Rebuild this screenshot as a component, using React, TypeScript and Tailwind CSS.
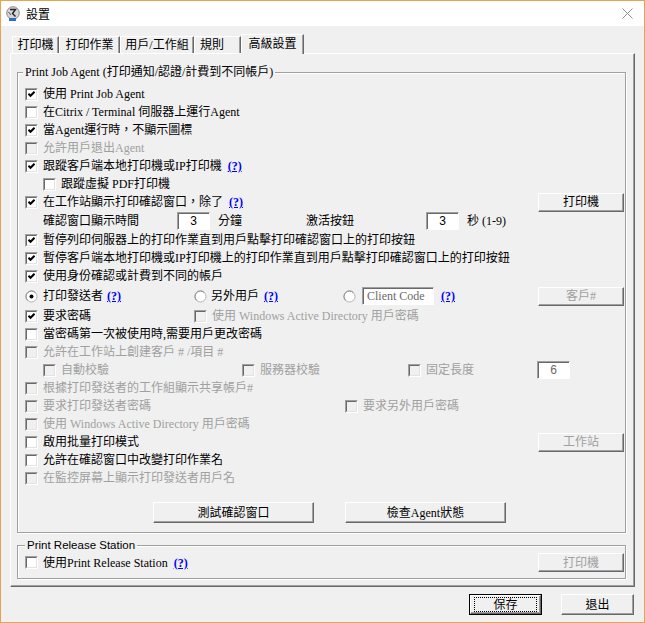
import React from "react";

type CBProps = { checked?: boolean; disabled?: boolean };

const CB = ({ checked = false, disabled = false }: CBProps) => (
  <span className="inline-flex w-[13px] h-[13px] shrink-0 border border-t-[#a0a0a0] border-l-[#a0a0a0] border-b-white border-r-white">
    <span
      className={
        "flex flex-1 items-center justify-center border border-t-[#696969] border-l-[#696969] border-b-[#e3e3e3] border-r-[#e3e3e3] " +
        (disabled ? "bg-[#f0f0f0]" : "bg-white")
      }
    >
      {checked && (
        <svg width="7" height="7" viewBox="0 0 7 7">
          <polyline points="0.5,2.8 2.5,4.8 6.5,0.8" fill="none" stroke="#000" strokeWidth="2" />
        </svg>
      )}
    </span>
  </span>
);

const Link = () => <span className="ml-[6px] text-[#0000ff] underline font-bold">(?)</span>;

const Check = ({
  label,
  checked,
  disabled,
  link,
  className = "",
}: {
  label: string;
  checked?: boolean;
  disabled?: boolean;
  link?: boolean;
  className?: string;
}) => (
  <div className={"flex items-center " + className}>
    <CB checked={checked} disabled={disabled} />
    <span className={"ml-[5px] whitespace-nowrap " + (disabled ? "text-[#a0a0a0]" : "")}>{label}</span>
    {link && <Link />}
  </div>
);

const Btn = ({
  children,
  disabled,
  className = "",
}: {
  children: React.ReactNode;
  disabled?: boolean;
  className?: string;
}) => (
  <div
    className={
      "flex items-center justify-center shrink-0 bg-[#f0f0f0] border border-t-white border-l-white border-r-[#696969] border-b-[#696969] shadow-[inset_-1px_-1px_0_#a0a0a0] whitespace-nowrap " +
      (disabled ? "text-[#a0a0a0] " : "") +
      className
    }
  >
    {children}
  </div>
);

const Field = ({ children, className = "" }: { children: React.ReactNode; className?: string }) => (
  <div
    className={
      "flex items-center shrink-0 bg-white border border-t-[#a0a0a0] border-l-[#a0a0a0] border-b-white border-r-white shadow-[inset_1px_1px_0_#696969] " +
      className
    }
  >
    {children}
  </div>
);

const Radio = ({ checked }: { checked?: boolean }) => (
  <svg width="13" height="13" viewBox="0 0 13 13" className="shrink-0">
    <circle cx="6.5" cy="6.5" r="5.5" fill="#fff" stroke="#b4b4b4" />
    <path d="M2.6 10.4 A5.5 5.5 0 0 1 10.4 2.6" fill="none" stroke="#8a8a8a" />
    {checked && <circle cx="6.5" cy="6.5" r="2" fill="#000" />}
  </svg>
);

const Tab = ({ label, w }: { label: string; w: string }) => (
  <div
    className={
      "h-[17px] flex items-center border-t border-l border-t-white border-l-white border-r border-r-[#696969] shadow-[inset_-1px_0_0_#a0a0a0] " +
      w
    }
  >
    {label}
  </div>
);

export default function App() {
  return (
    <div className="w-[645px] h-[623px] border border-[#e6a44e] bg-[#f0f0f0] flex flex-col overflow-hidden text-[12px] leading-[14px] text-black font-['Liberation_Serif','Noto_Sans_CJK_TC',serif] select-none">
      {/* Title bar */}
      <div className="h-[25px] shrink-0 bg-white flex items-center pl-[4px]">
        <svg width="16" height="16" viewBox="0 0 16 16">
          <circle cx="8" cy="7" r="6.3" fill="#d6d6d6" stroke="#8a8a8a" />
          <path d="M5 3.5 L10.5 3.5 L7.5 7.5 L10.5 10.5" stroke="#222" strokeWidth="1.4" fill="none" />
          <path d="M3.5 6 L6 9" stroke="#555" strokeWidth="1" />
          <rect x="4" y="12" width="7" height="3" fill="#2f6fc4" />
        </svg>
        <span className="ml-[5px] text-[12px] font-['Noto_Sans_CJK_TC',sans-serif]">設置</span>
        <svg width="11" height="11" viewBox="0 0 11 11" className="ml-auto mr-[11px]">
          <path d="M0.5 0.5 L10.5 10.5 M10.5 0.5 L0.5 10.5" stroke="#8c8c8c" strokeWidth="1" />
        </svg>
      </div>

      {/* Body */}
      <div className="flex flex-col px-[9px]">
        {/* Tabs */}
        <div className="mt-[8px] h-[19px] flex items-end ml-[2px]">
          <Tab label="打印機" w="w-[47px] justify-center" />
          <Tab label="打印作業" w="w-[61px] justify-center" />
          <Tab label="用戶/工作組" w="w-[74px] justify-center" />
          <Tab label="規則" w="w-[47px] pl-[5px]" />
          <div className="relative z-10 -mb-[1px] h-[20px] w-[63px] bg-[#f0f0f0] flex items-center justify-center pb-[2px] border-t border-l border-t-white border-l-white border-r border-r-[#696969] shadow-[inset_-1px_0_0_#a0a0a0]">
            高級設置
          </div>
        </div>

        {/* Tab panel */}
        <div className="flex flex-col border border-t-white border-l-white border-r-[#696969] border-b-[#696969] shadow-[inset_-1px_-1px_0_#a0a0a0] pt-[10px] pl-[6px] pr-[8px] pb-[7px]">
          {/* Group 1 */}
          <fieldset className="m-0 p-0 min-w-0 border border-[#a0a0a0] shadow-[inset_1px_1px_0_#fff,1px_1px_0_#fff]">
            <legend className="ml-[5px] px-[2px] bg-[#f0f0f0] leading-[16px] whitespace-nowrap font-['Liberation_Serif','Noto_Sans_CJK_TC',serif]">
              Print Job Agent (打印通知/認證/計費到不同帳戶)
            </legend>
            <div className="flex flex-col pt-[5px] pl-[7px] pr-[1px] pb-[9px]">
              <div className="h-[18px] flex items-center">
                <Check label="使用 Print Job Agent" checked />
              </div>
              <div className="h-[18px] flex items-center">
                <Check label="在Citrix / Terminal 伺服器上運行Agent" />
              </div>
              <div className="h-[18px] flex items-center">
                <Check label="當Agent運行時，不顯示圖標" checked />
              </div>
              <div className="h-[18px] flex items-center">
                <Check label="允許用戶退出Agent" disabled />
              </div>
              <div className="h-[18px] flex items-center">
                <Check label="跟蹤客戶端本地打印機或IP打印機" checked link />
              </div>
              <div className="h-[18px] flex items-center pl-[18px]">
                <Check label="跟蹤虛擬 PDF打印機" />
              </div>
              <div className="h-[18px] flex items-center">
                <Check label="在工作站顯示打印確認窗口，除了" checked link />
                <Btn className="ml-auto w-[86px] h-[19px]">打印機</Btn>
              </div>
              <div className="h-[20px] flex items-center pl-[18px]">
                <span className="w-[134px] whitespace-nowrap">確認窗口顯示時間</span>
                <Field className="w-[33px] h-[18px] justify-center font-['Liberation_Sans',sans-serif]">3</Field>
                <span className="ml-[8px] w-[88px]">分鐘</span>
                <span className="w-[120px]">激活按鈕</span>
                <Field className="w-[33px] h-[18px] justify-center font-['Liberation_Sans',sans-serif]">3</Field>
                <span className="ml-[8px] whitespace-nowrap">秒 (1-9)</span>
              </div>
              <div className="h-[18px] flex items-center">
                <Check label="暫停列印伺服器上的打印作業直到用戶點擊打印確認窗口上的打印按鈕" checked />
              </div>
              <div className="h-[18px] flex items-center">
                <Check label="暫停客戶端本地打印機或IP打印機上的打印作業直到用戶點擊打印確認窗口上的打印按鈕" checked />
              </div>
              <div className="h-[18px] flex items-center">
                <Check label="使用身份確認或計費到不同的帳戶" checked />
              </div>
              <div className="h-[22px] flex items-center">
                <div className="w-[169px] flex items-center">
                  <Radio checked />
                  <span className="ml-[5px]">打印發送者</span>
                  <span className="ml-[4px] text-[#0000ff] underline font-bold">(?)</span>
                </div>
                <div className="w-[149px] flex items-center">
                  <Radio />
                  <span className="ml-[4px]">另外用戶</span>
                  <span className="ml-[5px] text-[#0000ff] underline font-bold">(?)</span>
                </div>
                <Radio />
                <Field className="ml-[6px] w-[72px] h-[18px] pl-[4px] text-[#6a6a6a]">Client Code</Field>
                <span className="ml-[7px] text-[#0000ff] underline font-bold">(?)</span>
                <Btn disabled className="ml-auto w-[86px] h-[19px]">
                  客戶#
                </Btn>
              </div>
              <div className="h-[18px] flex items-center">
                <div className="w-[169px] flex items-center">
                  <Check label="要求密碼" checked />
                </div>
                <Check label="使用 Windows Active Directory 用戶密碼" disabled />
              </div>
              <div className="h-[18px] flex items-center">
                <Check label="當密碼第一次被使用時,需要用戶更改密碼" />
              </div>
              <div className="h-[18px] flex items-center">
                <Check label="允許在工作站上創建客戶 # /項目 #" disabled />
              </div>
              <div className="h-[18px] flex items-center pl-[18px]">
                <div className="w-[199px] flex items-center">
                  <Check label="自動校驗" disabled />
                </div>
                <div className="w-[166px] flex items-center">
                  <Check label="服務器校驗" disabled />
                </div>
                <div className="w-[129px] flex items-center">
                  <Check label="固定長度" disabled />
                </div>
                <Field className="w-[33px] h-[18px] justify-center text-[#6a6a6a] font-['Liberation_Sans',sans-serif]">6</Field>
              </div>
              <div className="h-[18px] flex items-center">
                <Check label="根據打印發送者的工作組顯示共享帳戶#" disabled />
              </div>
              <div className="h-[18px] flex items-center">
                <div className="w-[320px] flex items-center">
                  <Check label="要求打印發送者密碼" disabled />
                </div>
                <Check label="要求另外用戶密碼" disabled />
              </div>
              <div className="h-[18px] flex items-center">
                <Check label="使用 Windows Active Directory 用戶密碼" disabled />
              </div>
              <div className="h-[18px] flex items-center">
                <Check label="啟用批量打印模式" />
                <Btn disabled className="ml-auto w-[86px] h-[19px]">
                  工作站
                </Btn>
              </div>
              <div className="h-[18px] flex items-center">
                <Check label="允許在確認窗口中改變打印作業名" />
              </div>
              <div className="h-[18px] flex items-center">
                <Check label="在監控屏幕上顯示打印發送者用戶名" disabled />
              </div>
              <div className="mt-[15px] flex items-center pl-[128px] gap-[31px]">
                <Btn className="w-[161px] h-[21px]">測試確認窗口</Btn>
                <Btn className="w-[161px] h-[21px]">檢查Agent狀態</Btn>
              </div>
            </div>
          </fieldset>

          {/* Group 2 */}
          <fieldset className="mt-[4px] m-0 p-0 min-w-0 border border-[#a0a0a0] shadow-[inset_1px_1px_0_#fff,1px_1px_0_#fff]">
            <legend className="ml-[7px] px-[2px] bg-[#f0f0f0] leading-[16px] text-[11.5px] font-['Liberation_Sans',sans-serif] whitespace-nowrap">
              Print Release Station
            </legend>
            <div className="flex flex-col pl-[7px] pr-[1px] pb-[6px]">
              <div className="h-[19px] flex items-center">
                <Check label="使用Print Release Station" link />
                <Btn disabled className="ml-auto w-[86px] h-[19px]">
                  打印機
                </Btn>
              </div>
            </div>
          </fieldset>
        </div>

        {/* Bottom buttons */}
        <div className="mt-[7px] flex justify-end pr-[1px] gap-[19px]">
          <div className="w-[73px] h-[21px] flex border border-black">
            <Btn className="flex-1 h-full">
              <span className="flex items-center justify-center w-[63px] h-[15px] border border-dotted border-black">
                保存
              </span>
            </Btn>
          </div>
          <Btn className="w-[73px] h-[21px]">退出</Btn>
        </div>
      </div>
    </div>
  );
}
